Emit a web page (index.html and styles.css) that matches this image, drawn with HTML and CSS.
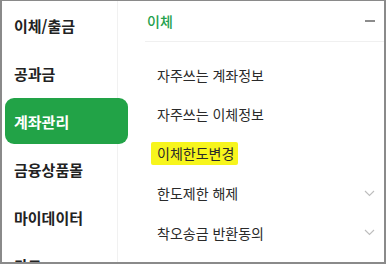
FILE: index.html
```html
<!DOCTYPE html>
<html lang="ko">
<head>
<meta charset="utf-8">
<link rel="stylesheet" href="styles.css">
</head>
<body>
<div class="frame">
  <nav class="side">
    <div class="side-item">이체/출금</div>
    <div class="side-item">공과금</div>
    <div class="side-item active">계좌관리</div>
    <div class="side-item">금융상품몰</div>
    <div class="side-item">마이데이터</div>
    <div class="side-item">카드</div>
  </nav>
  <section class="panel">
    <div class="group">
      <div class="group-head">
        <span class="group-title">이체</span>
        <span class="minus"></span>
      </div>
      <ul class="sub">
        <li class="sub-item">자주쓰는 계좌정보</li>
        <li class="sub-item">자주쓰는 이체정보</li>
        <li class="sub-item"><span class="mark">이체한도변경</span></li>
        <li class="sub-item">한도제한 해제
          <svg class="chev" width="11" height="7" viewBox="0 0 11 7"><path d="M1 1l4.5 4.5L10 1" fill="none" stroke="#bdbdbd" stroke-width="1.1"/></svg>
        </li>
        <li class="sub-item">착오송금 반환동의
          <svg class="chev" width="11" height="7" viewBox="0 0 11 7"><path d="M1 1l4.5 4.5L10 1" fill="none" stroke="#bdbdbd" stroke-width="1.1"/></svg>
        </li>
      </ul>
    </div>
  </section>
</div>
</body>
</html>
```
FILE: styles.css
```css
* { box-sizing: border-box; }
html, body { margin: 0; padding: 0; background: #fff; }
body {
  font-family: "Noto Sans CJK KR", "Noto Sans", sans-serif;
  overflow: hidden;
}
.frame {
  width: 386px;
  height: 264px;
  border-style: solid;
  border-color: #8a8a8a;
  border-width: 1px 2px 2px 2px;
  display: flex;
  overflow: hidden;
  background: #fff;
}
.side {
  width: 116px;
  flex: none;
  border-right: 1px solid #f1f1f1;
  background: #fff;
  position: relative;
  z-index: 1;
}
.side-item {
  height: 48px;
  display: flex;
  align-items: center;
  padding-left: 12px;
  font-size: 15px;
  font-weight: 700;
  color: #222;
  white-space: nowrap;
}
.side-item.active {
  width: 123px;
  height: 46px;
  margin: 1px 0 1px 3px;
  padding-left: 9px;
  background: #22a347;
  color: #fff;
  border-radius: 9px;
  position: relative;
}
.panel {
  flex: 1;
  min-width: 0;
}
.group {
  margin-left: 27px;
}
.group-head {
  height: 41px;
  display: flex;
  align-items: center;
  justify-content: space-between;
  padding: 0 9px 0 2px;
  border-bottom: 1px solid #f0f0f0;
}
.group-title {
  font-size: 14px;
  font-weight: 500;
  color: #22a04b;
}
.minus {
  width: 10px;
  height: 1.5px;
  background: #8c8c8c;
}
.sub {
  list-style: none;
  margin: 0;
  padding: 13px 0 0 0;
}
.sub-item {
  height: 39.5px;
  display: flex;
  align-items: center;
  justify-content: space-between;
  padding: 0 9px 0 12px;
  font-size: 14px;
  color: #2a2a2a;
  white-space: nowrap;
}
.mark {
  background: #f7f51c;
  padding: 1px 4px 2px 6px;
  margin-left: -6px;
  border-radius: 2px;
}
.chev { flex: none; }
```
